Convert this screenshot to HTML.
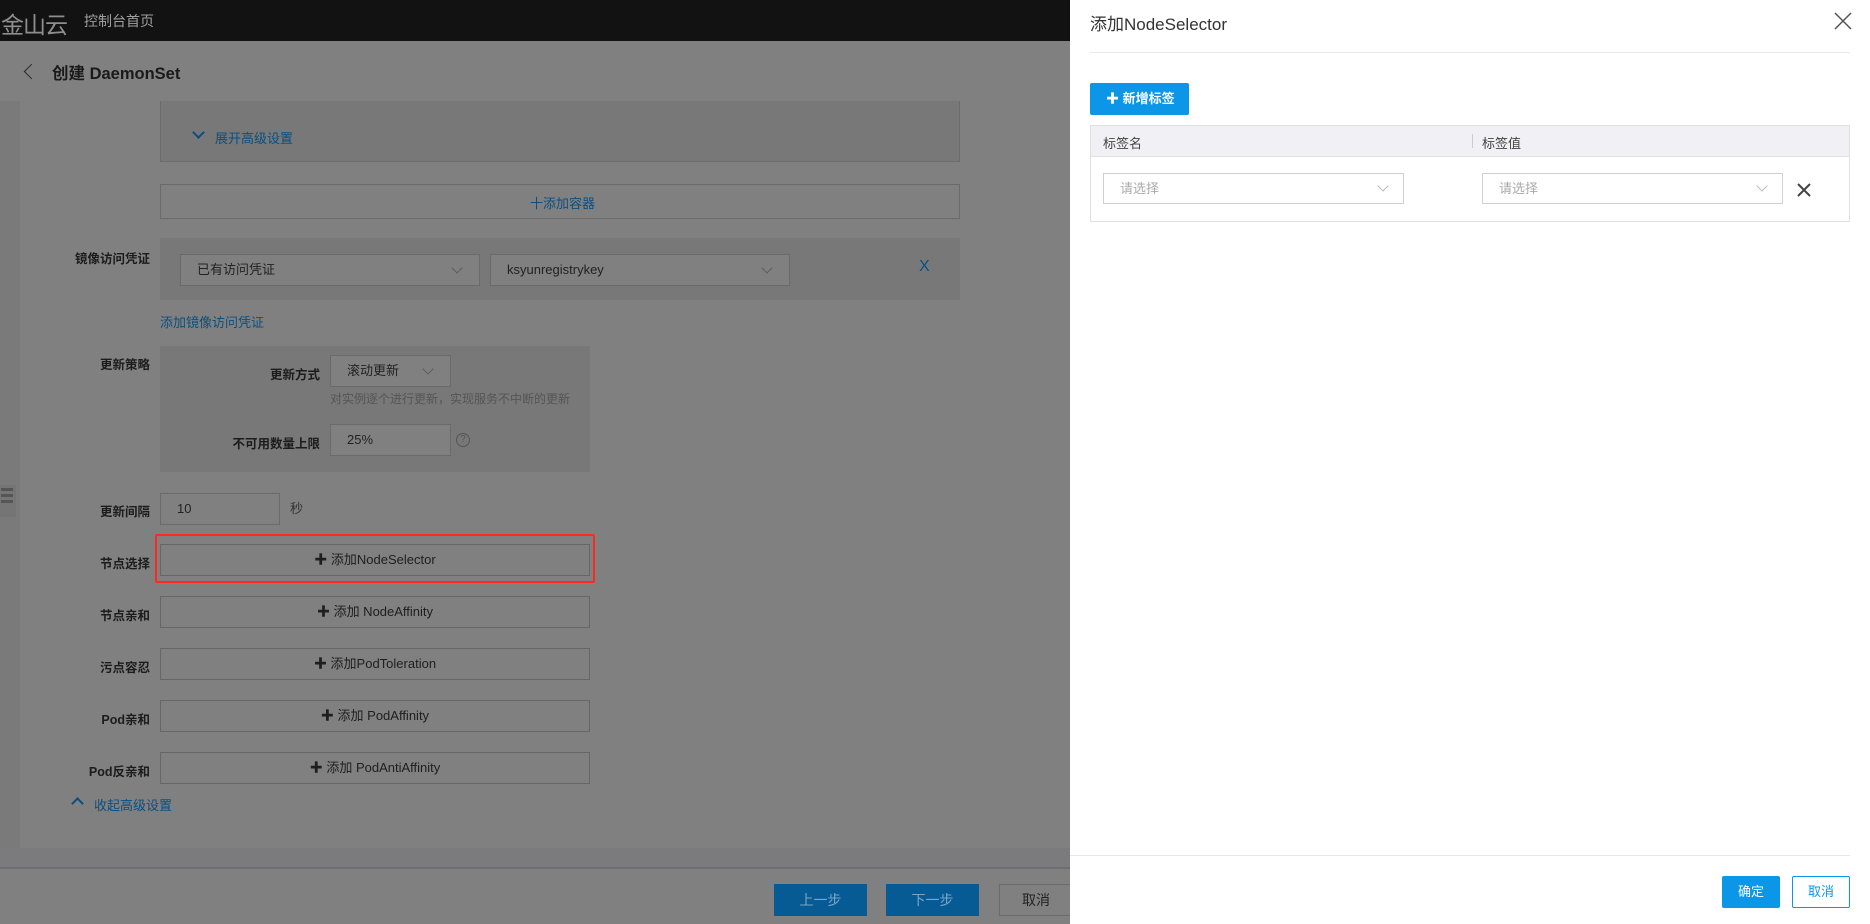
<!DOCTYPE html>
<html><head><meta charset="utf-8"><style>
*{margin:0;padding:0;box-sizing:border-box}
body{width:1870px;height:924px;overflow:hidden;position:relative;background:#808080;font-family:"Liberation Sans","Noto Sans CJK SC",sans-serif;color:#1f1f1f;font-size:13px}
.a{position:absolute}
.hdr{left:0;top:0;width:1870px;height:41px;background:#121212}
.lbl{position:absolute;width:150px;text-align:right;font-size:12.5px;color:#1c1c1c;font-weight:bold}
.box{position:absolute;background:#787878}
.inp{position:absolute;border:1px solid #6a6a6a;background:#808080;font-size:13px;color:#222;line-height:30px;padding-left:16px}
.btn{position:absolute;left:160px;width:430px;height:32px;border:1px solid #666;background:#808080;text-align:center;line-height:30px;font-size:13px;color:#1e1e1e}
.chev{position:absolute;width:8px;height:8px;border-right:1px solid #5c5c5c;border-bottom:1px solid #5c5c5c;transform:rotate(45deg)}
.blue{color:#0a4f80}
.drawer{left:1070px;top:0;width:800px;height:924px;background:#fff}
.sel{position:absolute;height:31px;border:1px solid #d0d0d0;background:#fff;color:#aaa;font-size:13px;line-height:29px;padding-left:16px}
.sel .chev{border-color:#bbb;top:8px;right:16px}
</style></head><body>
<div class="a hdr"></div>
<div class="a" style="left:1px;top:6px;font-size:23px;color:#8e8e8e;letter-spacing:-1px">金山云</div>
<div class="a" style="left:84px;top:11px;font-size:14px;color:#a0a0a0">控制台首页</div>
<div class="a" style="left:0;top:41px;width:1070px;height:60px;background:#808080"></div>
<div class="chev" style="left:26px;top:66px;width:11px;height:11px;border-right:none;border-bottom:1.5px solid #2a2a2a;border-left:1.5px solid #2a2a2a"></div>
<div class="a" style="left:52px;top:60px;font-size:16.5px;font-weight:bold;color:#1a1a1a">创建 DaemonSet</div>
<div class="a" style="left:0;top:101px;width:20px;height:767px;background:#7a7a7b"></div>
<div class="a" style="left:0;top:848px;width:1070px;height:20px;background:#7b7b7d"></div>
<div class="a" style="left:0;top:867px;width:1070px;height:2px;background:#6e6e6e"></div>
<div class="a" style="left:0;top:485px;width:16px;height:32px;background:#757575"></div>
<div class="a" style="left:1px;top:488px;width:12px;height:3px;background:#555;box-shadow:0 6px 0 #555,0 12px 0 #555"></div>

<div class="box" style="left:160px;top:101px;width:800px;height:61px;border:1px solid #6c6c6c;border-top:none"></div>
<div class="chev" style="left:194px;top:128px;border-color:#0a4f80;border-width:2px;border-style:none solid solid none;width:9px;height:9px"></div>
<div class="a blue" style="left:215px;top:128px;font-size:13px">展开高级设置</div>
<div class="a" style="left:160px;top:184px;width:800px;height:35px;border:1px solid #6a6a6a"></div>
<div class="a blue" style="left:530px;top:193px;font-size:13px">十添加容器</div>

<div class="lbl" style="left:0;top:248px">镜像访问凭证</div>
<div class="box" style="left:160px;top:238px;width:800px;height:62px"></div>
<div class="inp" style="left:180px;top:254px;width:300px;height:32px">已有访问凭证<div class="chev" style="right:18px;top:9px"></div></div>
<div class="inp" style="left:490px;top:254px;width:300px;height:32px">ksyunregistrykey<div class="chev" style="right:18px;top:9px"></div></div>
<div class="a blue" style="left:919px;top:258px;font-size:16px">X</div>
<div class="a blue" style="left:160px;top:312px;font-size:13px">添加镜像访问凭证</div>

<div class="lbl" style="left:0;top:354px">更新策略</div>
<div class="box" style="left:160px;top:346px;width:430px;height:126px"></div>
<div class="lbl" style="left:170px;top:364px">更新方式</div>
<div class="inp" style="left:330px;top:355px;width:121px;height:32px">滚动更新<div class="chev" style="right:18px;top:9px"></div></div>
<div class="a" style="left:330px;top:390px;font-size:12px;color:#555">对实例逐个进行更新，实现服务不中断的更新</div>
<div class="lbl" style="left:170px;top:433px">不可用数量上限</div>
<div class="inp" style="left:330px;top:424px;width:121px;height:32px">25%</div>
<div class="a" style="left:456px;top:433px;width:14px;height:14px;border:1px solid #555;border-radius:50%;font-size:10px;line-height:12px;text-align:center;color:#555">?</div>

<div class="lbl" style="left:0;top:501px">更新间隔</div>
<div class="inp" style="left:160px;top:493px;width:120px;height:32px">10</div>
<div class="a" style="left:290px;top:498px;font-size:13px;color:#333">秒</div>

<div class="lbl" style="left:0;top:553px">节点选择</div>
<div class="btn" style="top:544px">✚ 添加NodeSelector</div>
<div class="a" style="left:155px;top:534px;width:440px;height:49px;border:2px solid #ff2a1f;border-radius:2px"></div>
<div class="lbl" style="left:0;top:605px">节点亲和</div>
<div class="btn" style="top:596px">✚ 添加 NodeAffinity</div>
<div class="lbl" style="left:0;top:657px">污点容忍</div>
<div class="btn" style="top:648px">✚ 添加PodToleration</div>
<div class="lbl" style="left:0;top:709px">Pod亲和</div>
<div class="btn" style="top:700px">✚ 添加 PodAffinity</div>
<div class="lbl" style="left:0;top:761px">Pod反亲和</div>
<div class="btn" style="top:752px">✚ 添加 PodAntiAffinity</div>
<div class="chev" style="left:73px;top:799px;border-color:#0a4f80;border-width:2px 0 0 2px;border-style:solid;width:9px;height:9px"></div>
<div class="a blue" style="left:94px;top:795px;font-size:13px">收起高级设置</div>

<div class="a" style="left:774px;top:884px;width:93px;height:32px;background:#065b95;color:#7ea6c4;text-align:center;line-height:32px;font-size:14px">上一步</div>
<div class="a" style="left:886px;top:884px;width:93px;height:32px;background:#065b95;color:#7ea6c4;text-align:center;line-height:32px;font-size:14px">下一步</div>
<div class="a" style="left:999px;top:884px;width:80px;height:32px;border:1px solid #6a6a6a;color:#222;line-height:30px;padding-left:22px;font-size:14px">取消</div>

<div class="a drawer"></div>
<div class="a" style="left:1090px;top:10px;font-size:17px;color:#333">添加NodeSelector</div>
<svg class="a" style="left:1834px;top:12px" width="18" height="18"><path d="M1 1L17 17M17 1L1 17" stroke="#555" stroke-width="1.5"/></svg>
<div class="a" style="left:1090px;top:52px;width:760px;height:1px;background:#e8e8e8"></div>
<div class="a" style="left:1090px;top:83px;width:99px;height:32px;background:#0b96e8;border-radius:2px;color:#fff;font-size:13px;font-weight:bold;line-height:32px;padding-left:16px">✚ 新增标签</div>
<div class="a" style="left:1090px;top:125px;width:760px;height:97px;border:1px solid #e0e0e0"></div>
<div class="a" style="left:1091px;top:126px;width:758px;height:31px;background:#f0f0f5;border-bottom:1px solid #e0e0e0"></div>
<div class="a" style="left:1103px;top:133px;font-size:13px;color:#444">标签名</div>
<div class="a" style="left:1472px;top:134px;width:1px;height:14px;background:#ccc"></div>
<div class="a" style="left:1482px;top:133px;font-size:13px;color:#444">标签值</div>
<div class="sel" style="left:1103px;top:173px;width:301px">请选择<div class="chev"></div></div>
<div class="sel" style="left:1482px;top:173px;width:301px">请选择<div class="chev"></div></div>
<svg class="a" style="left:1797px;top:183px" width="14" height="14"><path d="M1 1L13 13M13 1L1 13" stroke="#444" stroke-width="2"/></svg>
<div class="a" style="left:1070px;top:855px;width:780px;height:1px;background:#e8e8e8"></div>
<div class="a" style="left:1722px;top:876px;width:58px;height:32px;background:#0b96e8;border-radius:2px;color:#fff;text-align:center;line-height:32px;font-size:13px">确定</div>
<div class="a" style="left:1792px;top:876px;width:58px;height:32px;border:1px solid #0b96e8;border-radius:2px;color:#0b96e8;text-align:center;line-height:30px;font-size:13px">取消</div>
</body></html>
